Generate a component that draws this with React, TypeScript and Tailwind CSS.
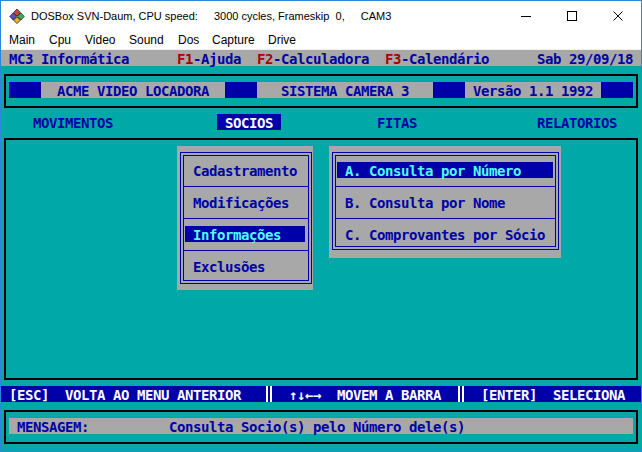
import React from "react";

const mono =
  "font-['DejaVu_Sans_Mono',monospace] text-[14px] tracking-[-0.43px] leading-[18px] font-bold whitespace-pre";

function DosIcon() {
  return (
    <svg width="16" height="16" viewBox="0 0 16 16">
      <polygon points="8,1 11.5,4.5 8,8 4.5,4.5" fill="#d83c3c" stroke="#2a2a2a" strokeWidth="0.8" />
      <polygon points="4,5 7.5,8.5 4,12 0.8,8.5" fill="#5a4fc8" stroke="#2a2a2a" strokeWidth="0.8" />
      <polygon points="12,5 15.2,8.5 12,12 8.5,8.5" fill="#3fae4a" stroke="#2a2a2a" strokeWidth="0.8" />
      <polygon points="8,9 11.5,12.2 8,15.5 4.5,12.2" fill="#e6b422" stroke="#2a2a2a" strokeWidth="0.8" />
    </svg>
  );
}

function DblBar() {
  return (
    <span className="inline-flex align-top w-[8px] h-[16px] justify-center gap-[2px]">
      <span className="w-[2px] h-full bg-[#fcfcfc]" />
      <span className="w-[2px] h-full bg-[#fcfcfc]" />
    </span>
  );
}

function PopItem({
  text,
  active,
  w,
}: {
  text: string;
  active?: boolean;
  w: string;
}) {
  return (
    <div
      className={`${mono} ml-[1px] ${w} h-[16px] pl-[8px] ${
        active ? "bg-[#0000a8] text-[#54fcfc]" : "text-[#0000a8]"
      }`}
    >
      {text}
    </div>
  );
}

export default function App() {
  return (
    <div className="w-[642px] h-[452px] border border-[#2b87d8] bg-white flex flex-col overflow-hidden">
      {/* Title bar */}
      <div className="h-[30px] flex items-center text-[11px] text-black font-['Liberation_Sans',Arial,sans-serif] shrink-0">
        <div className="w-[30px] shrink-0 pl-[8px] flex items-center">
          <DosIcon />
        </div>
        <span className="shrink-0 whitespace-pre">DOSBox SVN-Daum, CPU speed:</span>
        <span className="shrink-0 ml-[16px] whitespace-pre">3000 cycles, Frameskip  0,</span>
        <span className="shrink-0 ml-[16px]">CAM3</span>
        <div className="ml-auto flex h-full">
          <div className="w-[46px] h-full flex items-center justify-center">
            <div className="w-[10px] h-[1px] bg-black" />
          </div>
          <div className="w-[46px] h-full flex items-center justify-center">
            <div className="w-[10px] h-[10px] border border-black" />
          </div>
          <div className="w-[46px] h-full flex items-center justify-center">
            <svg width="10" height="10" viewBox="0 0 10 10">
              <path d="M0.5 0.5 L9.5 9.5 M9.5 0.5 L0.5 9.5" stroke="#000" strokeWidth="1" />
            </svg>
          </div>
        </div>
      </div>

      {/* Menu bar */}
      <div className="h-[18px] flex items-center text-[12px] text-black font-['Liberation_Sans',Arial,sans-serif] pl-[8px] shrink-0">
        <span className="w-[40px]">Main</span>
        <span className="w-[36px]">Cpu</span>
        <span className="w-[44px]">Video</span>
        <span className="w-[49px]">Sound</span>
        <span className="w-[34px]">Dos</span>
        <span className="w-[56px]">Capture</span>
        <span>Drive</span>
      </div>
      <div className="h-[1px] bg-[#f0f0f0] shrink-0" />

      {/* DOS screen */}
      <div className="flex-1 bg-[#00a8a8] flex flex-col">
        {/* Row 0: status */}
        <div className={`${mono} h-[16px] bg-[#a8a8a8] text-[#0000a8]`}>
          {" MC3 Informática      "}
          <span className="text-[#a80000]">F1</span>
          {"-Ajuda  "}
          <span className="text-[#a80000]">F2</span>
          {"-Calculadora  "}
          <span className="text-[#a80000]">F3</span>
          {"-Calendário      Sab 29/09/18 "}
        </div>
        <div className="h-[8px]" />

        {/* Banner frame */}
        <div className="mx-[3px] h-[34px] border-2 border-black pt-[6px] pl-[3px]">
          <div className={`${mono} flex h-[16px] text-[#0000a8]`}>
            <span className="w-[32px] bg-[#0000a8]" />
            <span className="w-[184px] bg-[#a8a8a8]">{"  ACME VIDEO LOCADORA"}</span>
            <span className="w-[32px] bg-[#0000a8]" />
            <span className="w-[176px] bg-[#a8a8a8]">{"   SISTEMA CAMERA 3"}</span>
            <span className="w-[32px] bg-[#0000a8]" />
            <span className="w-[136px] bg-[#a8a8a8]">{" Versão 1.1 1992"}</span>
            <span className="w-[32px] bg-[#0000a8]" />
          </div>
        </div>
        <div className="h-[6px]" />

        {/* Tabs */}
        <div className={`${mono} h-[16px] text-[#0000a8]`}>
          {"    MOVIMENTOS             "}
          <span className="inline-block align-top h-[16px] leading-[18px] bg-[#0000a8] text-[#fcfcfc]">{" SOCIOS "}</span>
          {"            FITAS               RELATORIOS   "}
        </div>
        <div className="h-[8px]" />

        {/* Main frame */}
        <div className="mx-[3px] h-[242px] border-2 border-black flex items-start pt-[6px] pl-[171px] gap-[16px]">
          {/* Left popup */}
          <div className="w-[136px] bg-[#a8a8a8] pt-[6px] pl-[3px] pr-[1px] pb-[6px]">
            <div className="border border-[#0000a8] p-[2px]">
              <div className="border border-[#0000a8]">
                <div className="h-[30px] pt-[6px]">
                  <PopItem w="w-[120px]" text="Cadastramento" />
                </div>
                <div className="h-[1px] bg-[#0000a8]" />
                <div className="h-[31px] pt-[7px]">
                  <PopItem w="w-[120px]" text="Modificações" />
                </div>
                <div className="h-[1px] bg-[#0000a8]" />
                <div className="h-[31px] pt-[7px]">
                  <PopItem w="w-[120px]" text="Informações" active />
                </div>
                <div className="h-[1px] bg-[#0000a8]" />
                <div className="h-[29px] pt-[7px]">
                  <PopItem w="w-[120px]" text="Exclusões" />
                </div>
              </div>
            </div>
          </div>

          {/* Right popup */}
          <div className="w-[232px] bg-[#a8a8a8] pt-[6px] pl-[3px] pr-[2px] pb-[8px]">
            <div className="border border-[#0000a8] p-[2px]">
              <div className="border border-[#0000a8]">
                <div className="h-[30px] pt-[6px]">
                  <PopItem w="w-[216px]" text="A. Consulta por Número" active />
                </div>
                <div className="h-[1px] bg-[#0000a8]" />
                <div className="h-[31px] pt-[7px]">
                  <PopItem w="w-[216px]" text="B. Consulta por Nome" />
                </div>
                <div className="h-[1px] bg-[#0000a8]" />
                <div className="h-[27px] pt-[7px]">
                  <PopItem w="w-[216px]" text="C. Comprovantes por Sócio" />
                </div>
              </div>
            </div>
          </div>
        </div>
        <div className="h-[6px]" />

        {/* Bottom key bar */}
        <div className={`${mono} h-[16px] bg-[#0000a8] text-[#fcfcfc]`}>
          {" [ESC]  VOLTA AO MENU ANTERIOR   "}
          <DblBar />
          {"  ↑↓←→  MOVEM A BARRA  "}
          <DblBar />
          {"  [ENTER]  SELECIONA  "}
        </div>
        <div className="h-[8px]" />

        {/* Message frame */}
        <div className="mx-[3px] h-[34px] border-2 border-black pt-[6px] pl-[3px]">
          <div className={`${mono} w-[624px] h-[16px] bg-[#a8a8a8] text-[#0000a8]`}>
            {" MENSAGEM:          Consulta Socio(s) pelo Número dele(s)"}
          </div>
        </div>
      </div>
    </div>
  );
}
